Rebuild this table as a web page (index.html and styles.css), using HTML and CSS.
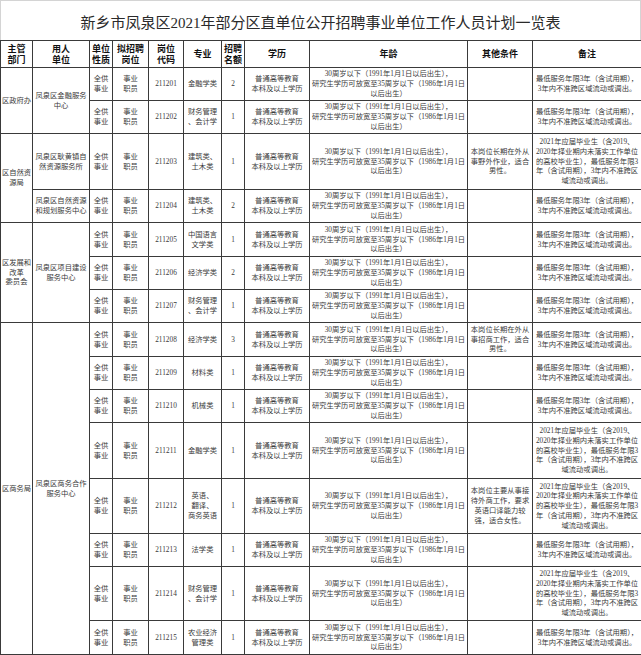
FILE: index.html
```html
<!DOCTYPE html>
<html lang="zh-CN">
<head>
<meta charset="utf-8">
<title>新乡市凤泉区2021年部分区直单位公开招聘事业单位工作人员计划一览表</title>
<link rel="stylesheet" href="styles.css">
</head>
<body>
<div class="sheet">
  <div class="title">新乡市凤泉区2021年部分区直单位公开招聘事业单位工作人员计划一览表</div>
  <table class="plan">
    <colgroup>
      <col class="c1"><col class="c2"><col class="c3"><col class="c4"><col class="c5"><col class="c6"><col class="c7"><col class="c8"><col class="c9"><col class="c10"><col class="c11">
    </colgroup>
    <thead>
      <tr class="head">
        <th>主管<br>部门</th><th>用人<br>单位</th><th>单位<br>性质</th><th>拟招聘<br>岗位</th><th>岗位<br>代码</th><th>专业</th><th>招聘<br>名额</th><th>学历</th><th>年龄</th><th>其他条件</th><th>备注</th>
      </tr>
    </thead>
    <tbody>
      <tr class="r33">
        <td rowspan="2">区政府办</td>
        <td rowspan="2">凤泉区金融服务<br>中心</td>
        <td>全供<br>事业</td><td>事业<br>职员</td><td>211201</td><td>金融学类</td><td>2</td>
        <td>普通高等教育<br>本科及以上学历</td>
        <td>30周岁以下（1991年1月1日以后出生），<br>研究生学历可放宽至35周岁以下（1986年1月1日<br>以后出生）</td>
        <td></td>
        <td>最低服务年限3年（含试用期），<br>3年内不准跨区域流动或调出。</td>
      </tr>
      <tr class="r33">
        <td>全供<br>事业</td><td>事业<br>职员</td><td>211202</td><td>财务管理<br>、会计学</td><td>1</td>
        <td>普通高等教育<br>本科及以上学历</td>
        <td>30周岁以下（1991年1月1日以后出生），<br>研究生学历可放宽至35周岁以下（1986年1月1日<br>以后出生）</td>
        <td></td>
        <td>最低服务年限3年（含试用期），<br>3年内不准跨区域流动或调出。</td>
      </tr>
      <tr class="r56">
        <td rowspan="2">区自然资<br>源局</td>
        <td>凤泉区耿黄镇自<br>然资源服务所</td>
        <td>全供<br>事业</td><td>事业<br>职员</td><td>211203</td><td>建筑类、<br>土木类</td><td>1</td>
        <td>普通高等教育<br>本科及以上学历</td>
        <td>30周岁以下（1991年1月1日以后出生），<br>研究生学历可放宽至35周岁以下（1986年1月1日<br>以后出生）</td>
        <td>本岗位长期在外从<br>事野外作业，适合<br>男性。</td>
        <td>2021年应届毕业生（含2019、<br>2020年择业期内未落实工作单位<br>的高校毕业生），最低服务年限3<br>年（含试用期），3年内不准跨区<br>域流动或调出。</td>
      </tr>
      <tr class="r33">
        <td>凤泉区自然资源<br>和规划服务中心</td>
        <td>全供<br>事业</td><td>事业<br>职员</td><td>211204</td><td>建筑类、<br>土木类</td><td>2</td>
        <td>普通高等教育<br>本科及以上学历</td>
        <td>30周岁以下（1991年1月1日以后出生），<br>研究生学历可放宽至35周岁以下（1986年1月1日<br>以后出生）</td>
        <td></td>
        <td>最低服务年限3年（含试用期），<br>3年内不准跨区域流动或调出。</td>
      </tr>
      <tr class="r34">
        <td rowspan="3">区发展和<br>改革<br>委员会</td>
        <td rowspan="3">凤泉区项目建设<br>服务中心</td>
        <td>全供<br>事业</td><td>事业<br>职员</td><td>211205</td><td>中国语言<br>文学类</td><td>1</td>
        <td>普通高等教育<br>本科及以上学历</td>
        <td>30周岁以下（1991年1月1日以后出生），<br>研究生学历可放宽至35周岁以下（1986年1月1日<br>以后出生）</td>
        <td></td>
        <td>最低服务年限3年（含试用期），<br>3年内不准跨区域流动或调出。</td>
      </tr>
      <tr class="r33">
        <td>全供<br>事业</td><td>事业<br>职员</td><td>211206</td><td>经济学类</td><td>2</td>
        <td>普通高等教育<br>本科及以上学历</td>
        <td>30周岁以下（1991年1月1日以后出生），<br>研究生学历可放宽至35周岁以下（1986年1月1日<br>以后出生）</td>
        <td></td>
        <td>最低服务年限3年（含试用期），<br>3年内不准跨区域流动或调出。</td>
      </tr>
      <tr class="r33">
        <td>全供<br>事业</td><td>事业<br>职员</td><td>211207</td><td>财务管理<br>、会计学</td><td>1</td>
        <td>普通高等教育<br>本科及以上学历</td>
        <td>30周岁以下（1991年1月1日以后出生），<br>研究生学历可放宽至35周岁以下（1986年1月1日<br>以后出生）</td>
        <td></td>
        <td>最低服务年限3年（含试用期），<br>3年内不准跨区域流动或调出。</td>
      </tr>
      <tr class="r34">
        <td rowspan="8">区商务局</td>
        <td rowspan="8">凤泉区商务合作<br>服务中心</td>
        <td>全供<br>事业</td><td>事业<br>职员</td><td>211208</td><td>经济学类</td><td>3</td>
        <td>普通高等教育<br>本科及以上学历</td>
        <td>30周岁以下（1991年1月1日以后出生），<br>研究生学历可放宽至35周岁以下（1986年1月1日<br>以后出生）</td>
        <td>本岗位长期在外从<br>事招商工作，适合<br>男性。</td>
        <td>最低服务年限3年（含试用期），<br>3年内不准跨区域流动或调出。</td>
      </tr>
      <tr class="r33">
        <td>全供<br>事业</td><td>事业<br>职员</td><td>211209</td><td>材料类</td><td>1</td>
        <td>普通高等教育<br>本科及以上学历</td>
        <td>30周岁以下（1991年1月1日以后出生），<br>研究生学历可放宽至35周岁以下（1986年1月1日<br>以后出生）</td>
        <td></td>
        <td>最低服务年限3年（含试用期），<br>3年内不准跨区域流动或调出。</td>
      </tr>
      <tr class="r33">
        <td>全供<br>事业</td><td>事业<br>职员</td><td>211210</td><td>机械类</td><td>1</td>
        <td>普通高等教育<br>本科及以上学历</td>
        <td>30周岁以下（1991年1月1日以后出生），<br>研究生学历可放宽至35周岁以下（1986年1月1日<br>以后出生）</td>
        <td></td>
        <td>最低服务年限3年（含试用期），<br>3年内不准跨区域流动或调出。</td>
      </tr>
      <tr class="r56">
        <td>全供<br>事业</td><td>事业<br>职员</td><td>211211</td><td>金融学类</td><td>1</td>
        <td>普通高等教育<br>本科及以上学历</td>
        <td>30周岁以下（1991年1月1日以后出生），<br>研究生学历可放宽至35周岁以下（1986年1月1日<br>以后出生）</td>
        <td></td>
        <td>2021年应届毕业生（含2019、<br>2020年择业期内未落实工作单位<br>的高校毕业生），最低服务年限3<br>年（含试用期），3年内不准跨区<br>域流动或调出。</td>
      </tr>
      <tr class="r55">
        <td>全供<br>事业</td><td>事业<br>职员</td><td>211212</td><td>英语、<br>翻译、<br>商务英语</td><td>1</td>
        <td>普通高等教育<br>本科及以上学历</td>
        <td>30周岁以下（1991年1月1日以后出生），<br>研究生学历可放宽至35周岁以下（1986年1月1日<br>以后出生）</td>
        <td>本岗位主要从事接<br>待外商工作，要求<br>英语口译能力较<br>强，适合女性。</td>
        <td>2021年应届毕业生（含2019、<br>2020年择业期内未落实工作单位<br>的高校毕业生），最低服务年限3<br>年（含试用期），3年内不准跨区<br>域流动或调出。</td>
      </tr>
      <tr class="r33">
        <td>全供<br>事业</td><td>事业<br>职员</td><td>211213</td><td>法学类</td><td>1</td>
        <td>普通高等教育<br>本科及以上学历</td>
        <td>30周岁以下（1991年1月1日以后出生），<br>研究生学历可放宽至35周岁以下（1986年1月1日<br>以后出生）</td>
        <td></td>
        <td>最低服务年限3年（含试用期），<br>3年内不准跨区域流动或调出。</td>
      </tr>
      <tr class="r54">
        <td>全供<br>事业</td><td>事业<br>职员</td><td>211214</td><td>财务管理<br>、会计学</td><td>1</td>
        <td>普通高等教育<br>本科及以上学历</td>
        <td>30周岁以下（1991年1月1日以后出生），<br>研究生学历可放宽至35周岁以下（1986年1月1日<br>以后出生）</td>
        <td></td>
        <td>2021年应届毕业生（含2019、<br>2020年择业期内未落实工作单位<br>的高校毕业生），最低服务年限3<br>年（含试用期），3年内不准跨区<br>域流动或调出。</td>
      </tr>
      <tr class="r34">
        <td>全供<br>事业</td><td>事业<br>职员</td><td>211215</td><td>农业经济<br>管理类</td><td>1</td>
        <td>普通高等教育<br>本科及以上学历</td>
        <td>30周岁以下（1991年1月1日以后出生），<br>研究生学历可放宽至35周岁以下（1986年1月1日<br>以后出生）</td>
        <td></td>
        <td>最低服务年限3年（含试用期），<br>3年内不准跨区域流动或调出。</td>
      </tr>
    </tbody>
  </table>
</div>
</body>
</html>
```
FILE: styles.css
```css
html, body {
  margin: 0;
  padding: 0;
  background: #fff;
}
.sheet {
  width: 641px;
  font-family: "Liberation Serif", "Noto Sans CJK SC", serif;
  color: #333;
}
.title {
  height: 39px;
  border: 1px solid #d4d4d4;
  border-bottom: none;
  box-sizing: content-box;
  display: flex;
  align-items: center;
  justify-content: center;
  font-size: 15px;
  color: #2a2a2a;
  padding-top: 1px;
  margin-bottom: -1px;
}
.plan {
  border-collapse: collapse;
  table-layout: fixed;
  width: 641px;
}
.c1 { width: 32px; }
.c2 { width: 57px; }
.c3 { width: 23px; }
.c4 { width: 36px; }
.c5 { width: 35px; }
.c6 { width: 38px; }
.c7 { width: 23px; }
.c8 { width: 65px; }
.c9 { width: 158px; }
.c10 { width: 65px; }
.c11 { width: 109px; }
.plan th, .plan td {
  border: 1px solid #3a3a3a;
  padding: 0;
  text-align: center;
  vertical-align: middle;
  overflow: hidden;
  white-space: nowrap;
}
.plan th {
  font-family: "Noto Sans CJK SC", sans-serif;
  font-weight: bold;
  font-size: 9px;
  line-height: 11.5px;
  color: #111;
}
.plan td {
  font-size: 7.3px;
  line-height: 9.8px;
  color: #3a3a3a;
}
.head { height: 27px; }
.r33 { height: 33px; }
.r34 { height: 34px; }
.r54 { height: 54px; }
.r55 { height: 55px; }
.r56 { height: 56px; }
```
